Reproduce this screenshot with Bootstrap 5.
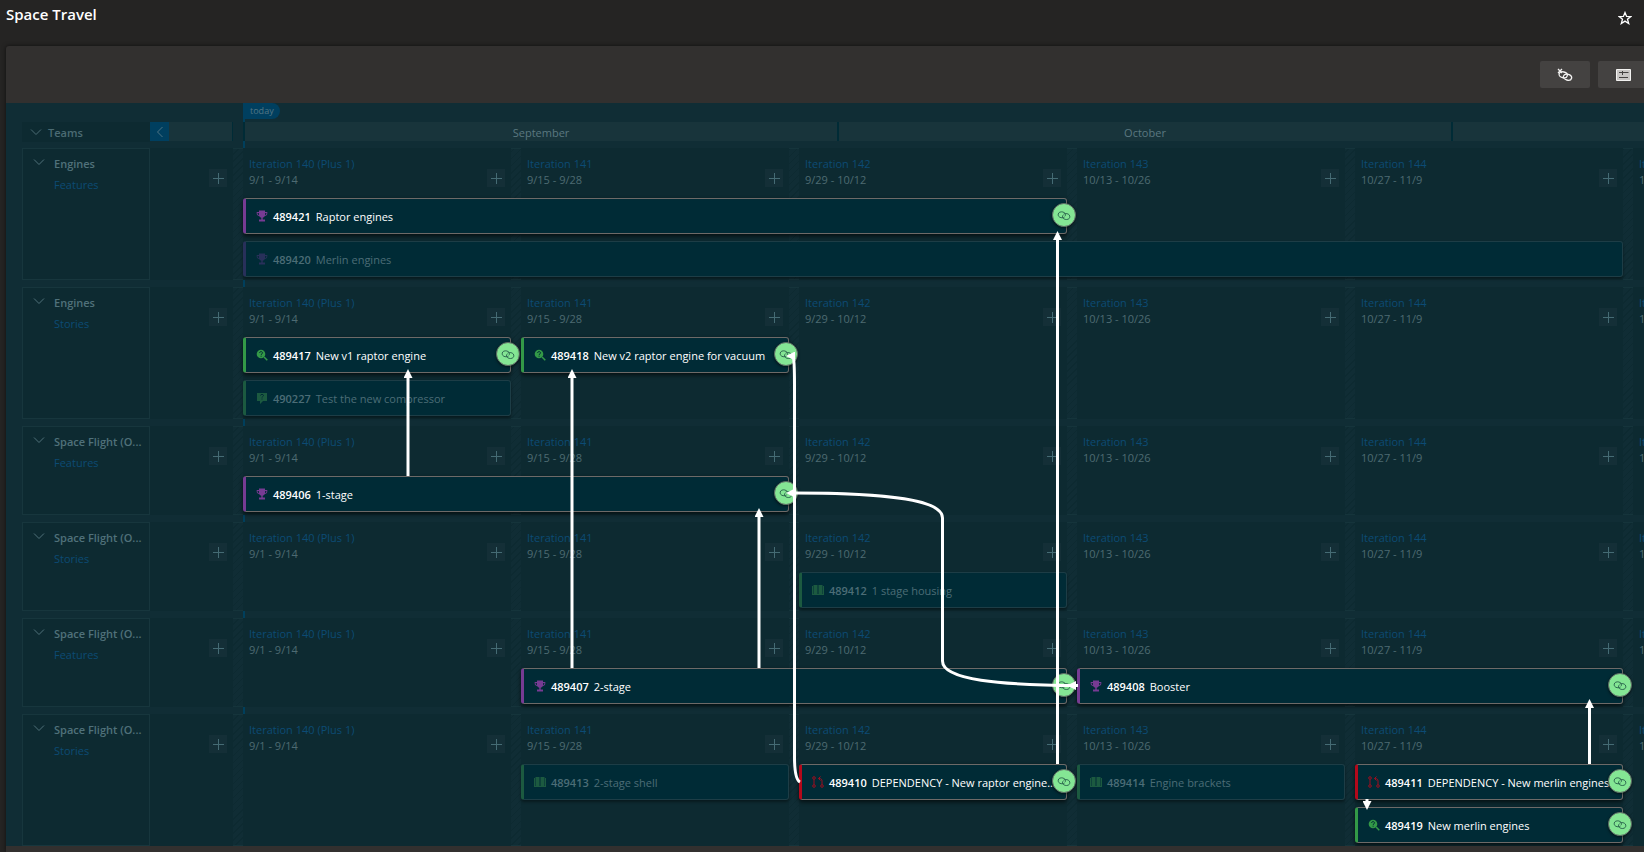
<!DOCTYPE html>
<html lang="en" data-bs-theme="dark">
<head>
<meta charset="utf-8">
<meta name="viewport" content="width=device-width, initial-scale=1">
<title>Space Travel</title>
<link rel="stylesheet" href="https://cdn.jsdelivr.net/npm/bootstrap@5.3.0/dist/css/bootstrap.min.css">
<style>
  body { background: #252423; color: #fff; font-family: "Open Sans", "Noto Sans", sans-serif; font-size: 11px; line-height: 15px; overflow: hidden; min-height: 100vh; }
  a { text-decoration: none; }
  button { font: inherit; }
  .page-head { height: 46px; padding: 3px 12px 0 6px; }
  .page-title { font-size: 15px; line-height: 22px; font-weight: 600; }
  .star-btn { width: 14px; height: 14px; margin-top: 8px; color: #fff; }
  .panel { margin-left: 6px; background: #32302f; border-top-left-radius: 3px; box-shadow: 0 0 4px #0009; flex: 1; overflow: hidden; }
  .tools { height: 57px; gap: 8px; margin-right: -4px; }
  .tool-btn { width: 50px; height: 27px; background: #444241; border-radius: 2px; color: #f3f2f1; }
  .board { background: #102d35; padding-left: 16px; overflow: hidden; }
  .ruler-gap { height: 19px; }
  .today-tag { margin-left: 221px; width: 37px; height: 16px; background: #003f5f; color: #527685; font-size: 9px; line-height: 15px; border-radius: 0 8px 8px 0; padding-left: 7px; }
  .today-line { left: 237px; top: 0; bottom: 0; width: 2px; background: #003f5c; }
  .ruler { height: 20px; margin-bottom: 6px; color: #5b7880; }
  .team-head { width: 128px; flex: none; background: #0d2a31; color: #4b6b73; font-weight: 600; padding-left: 8px; gap: 6px; }
  .side-head { width: 83px; height: 19px; background: #18343b; border-right: 1px solid #002b36; margin-right: 10px; }
  .fold-btn { width: 19px; height: 19px; background: #003f5f; color: #4d7484; }
  .month { height: 19px; line-height: 22px; background: #18343b; border-left: 2px solid #002b36; flex: none; }
  .lanes { display: grid; gap: 7px; }
  .lane { display: grid; grid-template-columns: 128px 83px max-content; }
  .team-box { background: #0d2a31; border: 1px solid #17363d; padding: 7px 0 0 10px; gap: 9px; color: #50717a; }
  .team-name { font-weight: 600; margin-bottom: 6px; white-space: nowrap; }
  .dim-link { color: #0c4b74; }
  .add-cell, .iter { background: #0d2a31; }
  .add-cell { padding: 21px 6px 0 0; }
  .track { display: grid; grid-template-columns: repeat(6, 268px); column-gap: 10px; grid-template-rows: 50px 36px 3px; padding-left: 10px;
    background: repeating-linear-gradient(135deg, #102d35 0 4px, #0d2a31 4px 5px); box-shadow: inset 0 1px #15343b, inset 0 -1px #15343b; }
  .track.tall { grid-template-rows: 50px 36px 7px 36px 3px; }
  .iter { grid-row: 1 / -1; padding: 8px 6px 0 6px; color: #4d6a72; }
  .iter a { display: block; margin-bottom: 1px; }
  .iter .add-btn { margin-top: 13px; }
  .add-btn { width: 18px; height: 18px; background: #142f37; color: #456b74; flex: none; }
  .item { position: relative; display: flex; align-items: center; background: #002b36; border: 1px solid #1d3d46; border-left: 3px solid; border-radius: 3px; box-shadow: 0 2px 3px #0006; color: #4c6d76; padding-left: 10px; white-space: nowrap; min-width: 0; }
  .item.lit { color: #fff; border-top-color: #6d6a68; border-right-color: #6d6a68; border-bottom-color: #6d6a68; box-shadow: 0 2px 4px #000a; }
  .item svg { flex: none; }
  .item b { font-weight: 600; margin: 0 5px; }
  .feature { border-left-color: #773b93; } .feature .kind { color: #773b93; }
  .spike { border-left-color: #339947; } .spike .kind { color: #339947; }
  .depend { border-left-color: #b3091b; } .depend .kind { color: #9c0f20; }
  .feature.faint { border-left-color: #28305a; } .feature.faint .kind { color: #28305a; }
  .story { border-left-color: #1c5a40; } .story .kind { color: #1c5a40; }
  .link-btn { position: absolute; right: -10px; top: 4px; width: 24px; height: 24px; border-radius: 50%; background: #84e694; border: 1px solid #5f6b66; color: #245a48; box-shadow: 0 1px 3px #0009; }
  .wires { position: absolute; left: 0; top: 0; pointer-events: none; }
</style>
</head>
<body class="d-flex flex-column">

<svg class="d-none" aria-hidden="true">
  <symbol id="i-down" viewBox="0 0 12 12"><path d="M1 3.500l5 5 5-5" fill="none" stroke="currentColor"/></symbol>
  <symbol id="i-left" viewBox="0 0 12 12"><path d="M8.500 1l-5 5 5 5" fill="none" stroke="currentColor"/></symbol>
  <symbol id="i-plus" viewBox="0 0 12 12"><path d="M6.500 1v11M1 6.500h11" fill="none" stroke="currentColor"/></symbol>
  <symbol id="i-link" viewBox="0 0 16 12"><g fill="none" stroke="currentColor"><path d="M8.600 7.800C7.300 8.800 5 8.900 3.200 8 1.200 7 .8 4.600 2 3.100 3.300 1.500 6.400 1.400 8.300 2.700c1.500 1 1.800 2.900.8 4.100"/><path d="M7.400 4.600C8.700 3.600 11 3.500 12.800 4.400c2 1 2.400 3.400 1.200 4.900-1.300 1.600-4.400 1.700-6.300.4-1.500-1-1.800-2.900-.8-4.100"/></g></symbol>
  <symbol id="i-trophy" viewBox="0 0 12 12"><path d="M3 .5h6V2h2.300v1.600C11.300 5 10.200 6 8.700 6.300 8.200 7 7.400 7.500 6.700 7.700V9.500H9V11.500H3V9.500h2.300V7.700C4.600 7.500 3.800 7 3.300 6.300 1.800 6 .7 5 .7 3.600V2H3zM1.600 2.900v.7c0 .8.500 1.400 1.300 1.700V2.900zM10.400 2.900H9.100v2.400c.8-.3 1.300-.9 1.300-1.700z" fill="currentColor" fill-rule="evenodd"/></symbol>
  <symbol id="i-spike" viewBox="0 0 12 12"><circle cx="5" cy="5" r="4.300" fill="currentColor"/><path d="M8 8l3.300 3.300" stroke="currentColor" stroke-width="1.500"/><path d="M3.600 4c0-1.900 2.900-1.800 2.900-.1 0 1-1.400 1-1.400 2M5.100 6.700v1" stroke="#002b36" fill="none"/></symbol>
  <symbol id="i-book" viewBox="0 0 12 12"><path d="M0 2h1v8H0zM11 2h1v8h-1zM1.500 1h4v9h-4zM6.500 1h4v9h-4zM0 10h12v1H0z" fill="currentColor"/></symbol>
  <symbol id="i-test" viewBox="0 0 12 12"><path d="M1 1h10v8H7l-3 3V9H1z" fill="currentColor"/><path d="M4.500 3.500c0-1.500 3-1.500 3 0 0 1-1.500 1-1.500 2M6 6.500v1" stroke="#002b36" fill="none"/></symbol>
  <symbol id="i-depend" viewBox="0 0 12 12"><g fill="none" stroke="currentColor"><circle cx="2" cy="2" r="1.300"/><circle cx="2" cy="10" r="1.300"/><circle cx="10" cy="10" r="1.300"/><path d="M2 3.300v5.400M10 8.700V5C10 3.500 9.500 2.500 6.500 2.500M8.500.5l-2 2 2 2"/></g></symbol>
</svg>

<header class="page-head d-flex justify-content-between align-items-start flex-shrink-0">
  <h1 class="page-title m-0">Space Travel</h1>
  <button class="star-btn btn p-0 border-0 d-flex" type="button" aria-label="Favorite">
    <svg width="14" height="14" viewBox="0 0 14 14"><path d="M7 1.500l1.600 3.900 4.200.2-3.300 2.700 1.200 4.200L7 10.100l-3.700 2.400 1.200-4.200L1.200 5.600l4.200-.2z" fill="none" stroke="currentColor" stroke-width="1.300"/></svg>
  </button>
</header>

<main class="panel">
  <div class="tools d-flex justify-content-end align-items-center">
    <button class="tool-btn btn p-0 border-0 d-flex align-items-center justify-content-center" type="button" aria-label="Clear dependency lines">
      <svg width="16" height="14" viewBox="0 0 16 14"><g fill="none" stroke="currentColor" stroke-width="1.300"><path d="M1 1l4 4M5 1L1 5"/><ellipse cx="6.200" cy="6.800" rx="4.200" ry="2.900" transform="rotate(15 6.200 6.800)"/><ellipse cx="10.500" cy="9.200" rx="4.200" ry="2.900" transform="rotate(15 10.500 9.200)"/></g></svg>
    </button>
    <button class="tool-btn btn p-0 border-0 d-flex align-items-center justify-content-center" type="button" aria-label="Card settings">
      <svg width="15" height="12" viewBox="0 0 15 12"><path d="M.5.500h14v11H.5z" fill="#c8c6c4" stroke="currentColor"/><path d="M3 3.500h3M6.500 2v4M6.500 3.500h6M3 8.500h9" fill="none" stroke="#444241"/></svg>
    </button>
  </div>

  <section class="board position-relative" aria-label="Delivery plan">
    <div class="today-line position-absolute"></div>
    <div class="ruler-gap"><div class="today-tag position-relative">today</div></div>
    <div class="ruler d-flex position-relative">
      <div class="team-head d-flex align-items-center"><svg width="12" height="12"><use href="#i-down"/></svg>Teams</div>
      <div class="side-head flex-shrink-0"><button class="fold-btn btn p-0 border-0 rounded-0 d-flex align-items-center justify-content-center" type="button" aria-label="Collapse teams"><svg width="12" height="12"><use href="#i-left"/></svg></button></div>
      <div class="month text-center" id="m9">September</div>
      <div class="month text-center" id="m10">October</div>
      <div class="month text-center" id="m11"></div>
    </div>
    <div class="lanes position-relative" id="lanes"></div>

    <svg class="wires" width="1638" height="742" viewBox="6 103 1638 742" aria-hidden="true">
      <defs>
        <marker id="tip" markerUnits="userSpaceOnUse" markerWidth="9" markerHeight="9" viewBox="0 0 9 9" refX="1" refY="4.500" orient="auto"><path d="M0 0l9 4.500L0 9z" fill="#fff"/></marker>
      </defs>
      <g fill="none" stroke="#fff" stroke-width="3">
        <path d="M408 476V377" marker-end="url(#tip)"/>
        <path d="M572 668V377" marker-end="url(#tip)"/>
        <path d="M759 668V516" marker-end="url(#tip)"/>
        <path d="M1057.500 764V239" marker-end="url(#tip)"/>
        <path d="M1589.500 764V707" marker-end="url(#tip)"/>
        <path d="M1367 799V802" marker-end="url(#tip)"/>
        <path d="M800 782C796 780 794.500 772 794.500 757V385C794.500 372 794.500 359 793 356"/>
        <path d="M795 356H794" marker-end="url(#tip)"/>
        <path d="M1078 685.500C1000 685 942.500 680 942.500 661V518C942.500 500 890 493 794 493" marker-end="url(#tip)"/>
        <path d="M1078 685.500H1075" marker-end="url(#tip)"/>
      </g>
    </svg>
  </section>
</main>

<script>
  const pitch = 278;
  const iterations = [
    ['Iteration 140 (Plus 1)', '9/1 - 9/14'], ['Iteration 141', '9/15 - 9/28'], ['Iteration 142', '9/29 - 10/12'],
    ['Iteration 143', '10/13 - 10/26'], ['Iteration 144', '10/27 - 11/9'], ['Iteration 145', '11/10 - 11/23']];
  // item: [id, title, type, icon, first iteration, iterations spanned, slot, linked]
  const lanes = [
    ['Engines', 'Features', true, [
      [489421, 'Raptor engines', 'feature', 'trophy', 1, 3, 1, true],
      [489420, 'Merlin engines', 'feature', 'trophy', 1, 5, 2, false]]],
    ['Engines', 'Stories', true, [
      [489417, 'New v1 raptor engine', 'spike', 'spike', 1, 1, 1, true],
      [489418, 'New v2 raptor engine for vacuum', 'spike', 'spike', 2, 1, 1, true],
      [490227, 'Test the new compressor', 'story', 'test', 1, 1, 2, false]]],
    ['Space Flight (O...', 'Features', false, [[489406, '1-stage', 'feature', 'trophy', 1, 2, 1, true]]],
    ['Space Flight (O...', 'Stories', false, [[489412, '1 stage housing', 'story', 'book', 3, 1, 1, false]]],
    ['Space Flight (O...', 'Features', false, [
      [489407, '2-stage', 'feature', 'trophy', 2, 2, 1, true],
      [489408, 'Booster', 'feature', 'trophy', 4, 2, 1, true]]],
    ['Space Flight (O...', 'Stories', true, [
      [489413, '2-stage shell', 'story', 'book', 2, 1, 1, false],
      [489410, 'DEPENDENCY - New raptor engine...', 'depend', 'depend', 3, 1, 1, true],
      [489414, 'Engine brackets', 'story', 'book', 4, 1, 1, false],
      [489411, 'DEPENDENCY - New merlin engines', 'depend', 'depend', 5, 1, 1, true],
      [489419, 'New merlin engines', 'spike', 'spike', 5, 1, 2, true]]]];
  const icon = (name, w, h, cls = '') => `<svg class="${cls}" width="${w}" height="${h}"><use href="#i-${name}"/></svg>`;
  const add = '<button class="add-btn btn p-0 border-0 rounded-0 d-flex align-items-center justify-content-center" type="button" aria-label="Add item">' + icon('plus', 12, 12) + '</button>';
  const cell = ([name, dates], i) => `<div class="iter d-flex justify-content-between align-items-start" style="grid-column:${i + 1}"><div><a class="dim-link" href="#">${name}</a>${dates}</div>${add}</div>`;
  const card = ([id, title, type, ic, col, span, slot, lit]) =>
    `<article class="item ${type} ${lit ? 'lit' : 'faint'}" style="grid-area:${slot * 2} / ${col} / auto / span ${span}">${icon(ic, 12, 12, 'kind')}<b>${id}</b><span>${title}</span>` +
    (lit ? `<button class="link-btn btn p-0 d-flex align-items-center justify-content-center" type="button" aria-label="Dependencies of ${id}">${icon('link', 14, 11)}</button>` : '') + '</article>';
  document.getElementById('lanes').innerHTML = lanes.map(([team, level, tall, items]) =>
    `<div class="lane"><div class="team-box d-flex align-items-start">${icon('down', 12, 12)}<div><div class="team-name">${team}</div><a class="dim-link" href="#">${level}</a></div></div>` +
    `<div class="add-cell d-flex justify-content-end align-items-start">${add}</div>` +
    `<div class="track ${tall ? 'tall' : ''}">${iterations.map(cell).join('')}${items.map(card).join('')}</div></div>`).join('');
  // month widths follow the day count, less the divider; an iteration covers 14 days
  [['m9', 30], ['m10', 31], ['m11', 30]].forEach(([id, days]) => { document.getElementById(id).style.width = Math.round(days * pitch / 14) - 2 + 'px'; });
</script>
<script src="https://cdn.jsdelivr.net/npm/bootstrap@5.3.0/dist/js/bootstrap.bundle.min.js"></script>
</body>
</html>
